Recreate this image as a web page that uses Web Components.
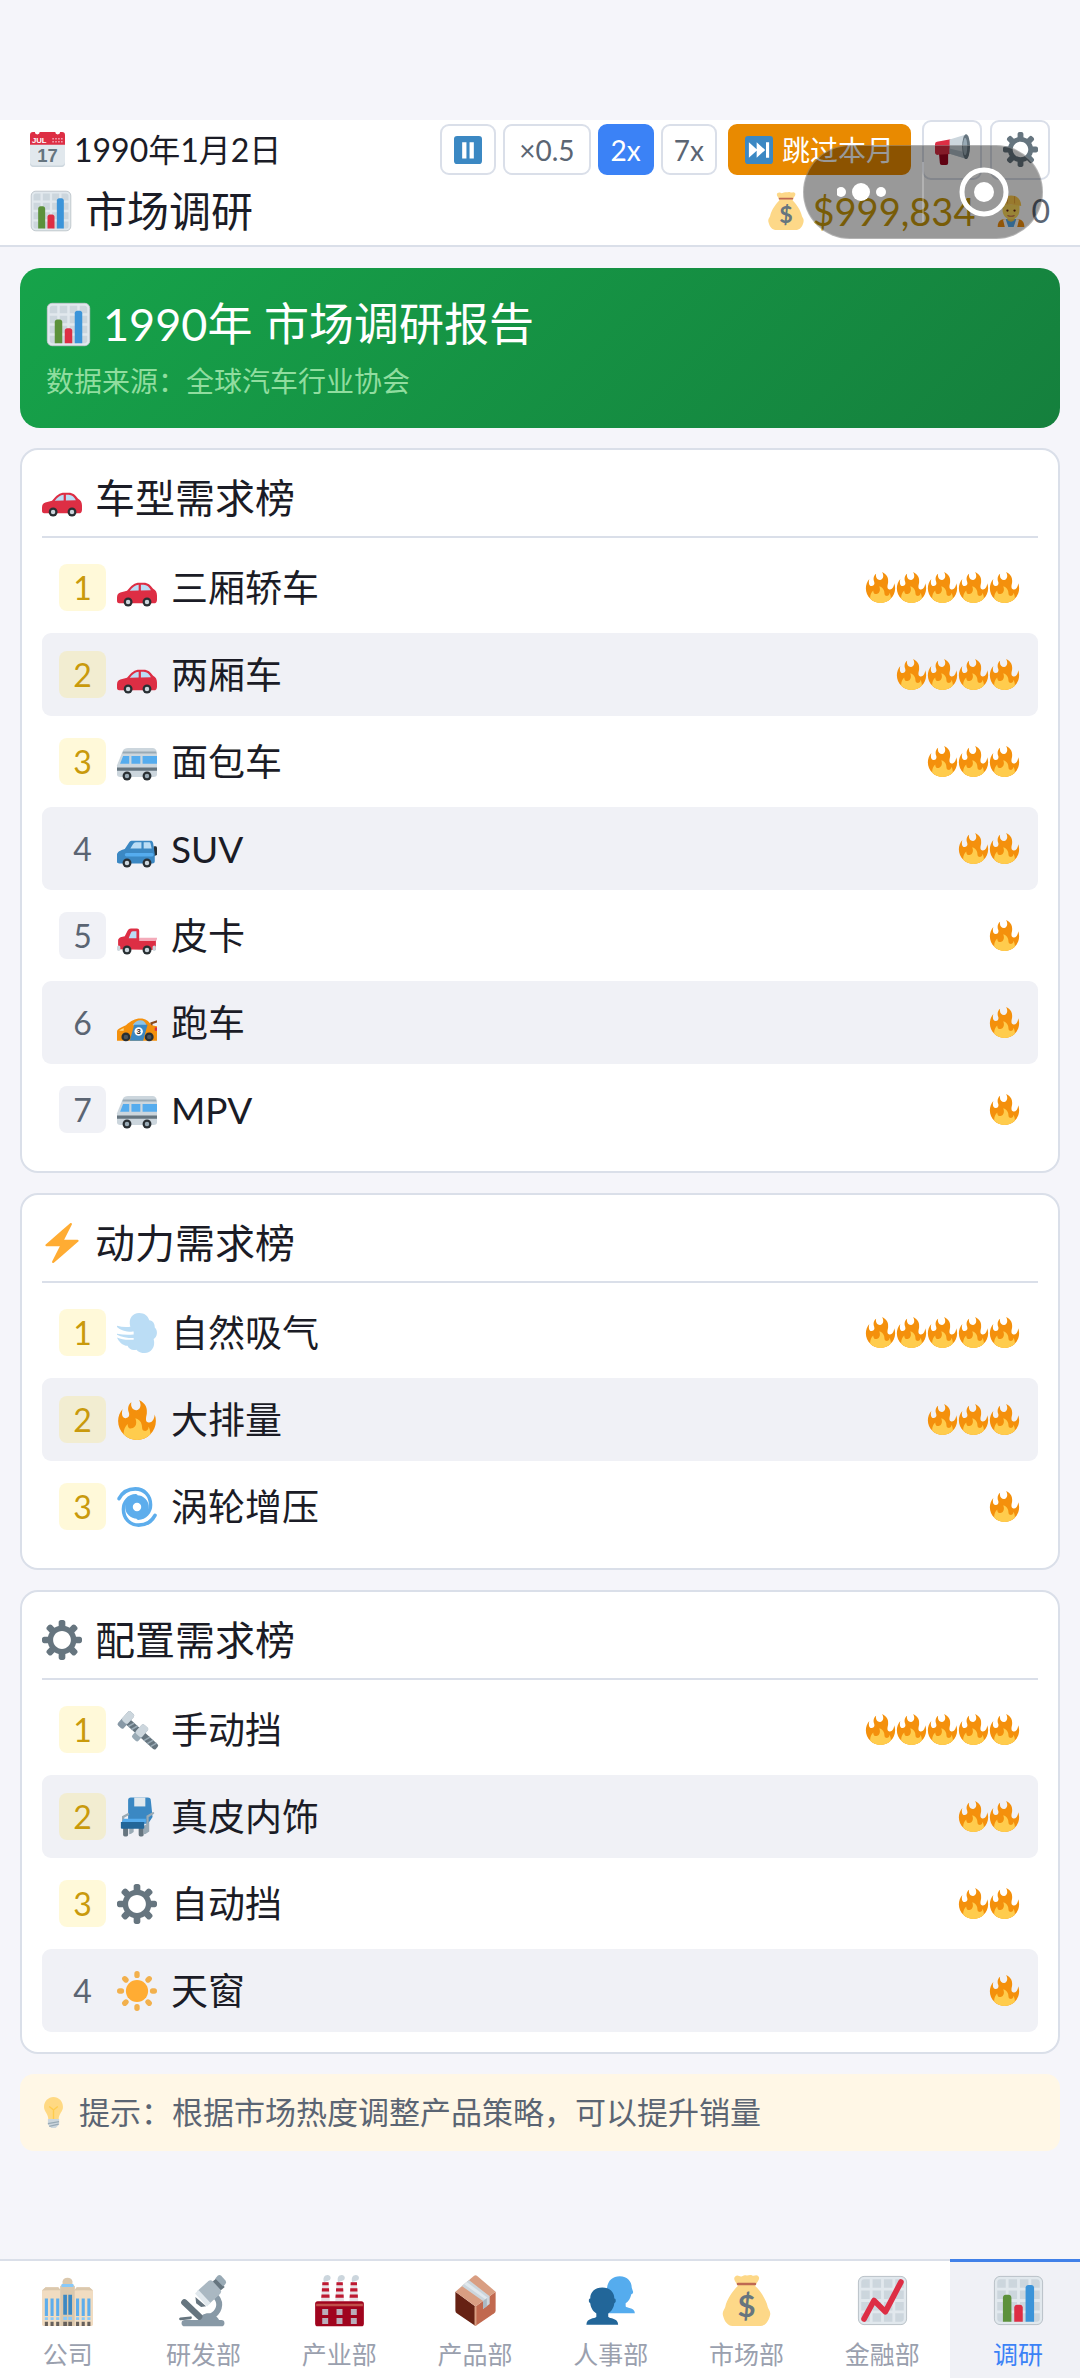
<!DOCTYPE html>
<html lang="zh-CN">
<head>
<meta charset="UTF-8">
<meta name="viewport" content="width=device-width, initial-scale=1">
<title>市场调研</title>
<style>
    :root {
        --bg: #f5f5fa;
        --line: #dadfe9;
        --soft: #f0f1f6;
        --ink: #1b1c26;
        --muted: #5b6573;
        --gold: #c99a0c;
        --blue: #3b82f6;
    }

    body {
        margin: 0;
        background: var(--bg);
        color: var(--ink);
        font-family: Lato, "Noto Sans CJK SC", sans-serif;
        line-height: 1;
    }
</style>
</head>
<body>

<game-app>
    <app-header slot="header" date="1990年1月2日" heading="市场调研" money="$999,834" staff="0"></app-header>

    <report-banner heading="1990年 市场调研报告">数据来源：全球汽车行业协会</report-banner>

    <rank-card icon="car" heading="车型需求榜">
        <rank-item rank="1" icon="car" heat="5">三厢轿车</rank-item>
        <rank-item rank="2" icon="car" heat="4">两厢车</rank-item>
        <rank-item rank="3" icon="van" heat="3">面包车</rank-item>
        <rank-item rank="4" icon="suv" heat="2">SUV</rank-item>
        <rank-item rank="5" icon="pickup" heat="1">皮卡</rank-item>
        <rank-item rank="6" icon="race" heat="1">跑车</rank-item>
        <rank-item rank="7" icon="van" heat="1">MPV</rank-item>
    </rank-card>

    <rank-card icon="bolt" heading="动力需求榜">
        <rank-item rank="1" icon="wind" heat="5">自然吸气</rank-item>
        <rank-item rank="2" icon="fire" heat="3">大排量</rank-item>
        <rank-item rank="3" icon="cyclone" heat="1">涡轮增压</rank-item>
    </rank-card>

    <rank-card icon="gear" heading="配置需求榜">
        <rank-item rank="1" icon="screw" heat="5">手动挡</rank-item>
        <rank-item rank="2" icon="seat" heat="2">真皮内饰</rank-item>
        <rank-item rank="3" icon="gear" heat="2">自动挡</rank-item>
        <rank-item rank="4" icon="sun" heat="1">天窗</rank-item>
    </rank-card>

    <tip-box>提示：根据市场热度调整产品策略，可以提升销量</tip-box>

    <tab-bar slot="tabs">
        <tab-item icon="office">公司</tab-item>
        <tab-item icon="microscope">研发部</tab-item>
        <tab-item icon="factory">产业部</tab-item>
        <tab-item icon="box">产品部</tab-item>
        <tab-item icon="people">人事部</tab-item>
        <tab-item icon="bag">市场部</tab-item>
        <tab-item icon="trend">金融部</tab-item>
        <tab-item icon="chart" active>调研</tab-item>
    </tab-bar>
</game-app>

<script>
// Icon artwork, all on a 36 x 36 grid
const GRID = `
    <rect x="1" y="1" width="34" height="34" rx="4" fill="#ccd6dd"/>
    <path fill="#e1e8ed" d="M31 1H5C2.791 1 1 2.791 1 5v26c0 2.209 1.791 4 4 4h26c2.209 0 4-1.791 4-4V5c0-2.209-1.791-4-4-4zm0 2c1.103 0 2 .897 2 2v4h-6V3h4zm-4 16h6v6h-6v-6zm0-2v-6h6v6h-6zM25 3v6h-6V3h6zm-6 8h6v6h-6v-6zm0 8h6v6h-6v-6zM17 3v6h-6V3h6zm-6 8h6v6h-6v-6zm0 8h6v6h-6v-6zM3 5c0-1.103.897-2 2-2h4v6H3V5zm0 6h6v6H3v-6zm0 8h6v6H3v-6zm2 14c-1.103 0-2-.897-2-2v-4h6v6H5zm6 0v-6h6v6h-6zm8 0v-6h6v6h-6zm12 0h-4v-6h6v4c0 1.103-.897 2-2 2z"/>
    <rect x="1" y="1" width="34" height="34" rx="4" fill="none" stroke="#b4bcc2" stroke-width=".6"/>`;

const wheels = (a, b, y, hub = '#ccd6dd') => [a, b].map(x => `
    <circle cx="${x}" cy="${y}" r="4" fill="#292f33"/>
    <circle cx="${x}" cy="${y}" r="2" fill="${hub}"/>`).join('');

const chimney = x => `
    <path fill="#e8dfe4" d="M${x + 1} 5h4.2l1 13.5H${x}z"/>
    <path fill="#be1931" d="M${x + .9} 5.2h4.4l.1 2H${x + .8}zM${x + .6} 9.4h5l.1 2.2H${x + .5}zM${x + .3} 13.8h5.6l.1 2.2H${x + .1}z"/>
    <path fill="#ccd6dd" d="M${x + 2} 5c-1-3 .5-5 2.5-5 3 0 3 4 0 4.200z"/>`;

const ICONS = {
    fire: `
        <path fill="#f4900c" d="M35 19c0-2.062-.367-4.039-1.04-5.868-.46 5.389-3.333 8.157-6.335 6.868-2.812-1.208-.917-5.917-.777-8.164.236-3.809-.012-8.169-6.931-11.794 2.875 5.5.333 8.917-2.333 9.125-2.958.231-5.667-2.542-4.667-7.042-3.238 2.386-3.332 6.402-2.333 9 1.042 2.708-.042 4.958-2.583 5.208-2.84.28-4.418-3.041-2.963-8.333C2.52 10.965 1 14.805 1 19c0 9.389 7.611 17 17 17s17-7.611 17-17z"/>
        <path fill="#ffcc4d" d="M28.394 23.999c.148 3.084-2.561 4.293-4.019 3.709-2.106-.843-1.541-2.291-2.083-5.291s-2.625-5.083-5.708-6c2.25 6.333-1.247 8.667-3.08 9.084-1.872.426-3.753-.001-3.968-4.007C7.352 23.668 6 26.676 6 30c0 .368.023.73.055 1.09C9.125 34.124 13.342 36 18 36s8.875-1.876 11.945-4.91c.032-.36.055-.722.055-1.09 0-2.187-.584-4.236-1.606-6.001z"/>`,
    chart: `${GRID}
        <path fill="#5c913b" d="M13 33H7V16c0-1.104.896-2 2-2h2c1.104 0 2 .896 2 2v17z"/>
        <path fill="#3b94d9" d="M29 33h-6V9c0-1.104.896-2 2-2h2c1.104 0 2 .896 2 2v24z"/>
        <path fill="#dd2e44" d="M21 33h-6V23c0-1.104.896-2 2-2h2c1.104 0 2 .896 2 2v10z"/>`,
    trend: `${GRID}
        <path fill="none" stroke="#dd2e44" stroke-width="4" stroke-linecap="round" stroke-linejoin="round" d="M5 31l7-13 8 8L31 5"/>`,
    gear: `
        <path fill="#66757f" d="M34 15h-3.362c-.324-1.369-.864-2.651-1.582-3.814l2.379-2.379c.781-.781.781-2.048 0-2.829l-1.414-1.414c-.781-.781-2.047-.781-2.828 0l-2.379 2.379C23.65 6.225 22.369 5.686 21 5.362V2c0-1.104-.896-2-2-2h-2c-1.104 0-2 .896-2 2v3.362c-1.369.324-2.651.864-3.814 1.582L8.808 4.565c-.781-.781-2.048-.781-2.828 0L4.565 5.979c-.781.781-.781 2.048-.001 2.829l2.379 2.379C6.225 12.35 5.686 13.632 5.362 15H2c-1.104 0-2 .896-2 2v2c0 1.104.896 2 2 2h3.362c.324 1.368.864 2.65 1.582 3.813l-2.379 2.379c-.78.78-.78 2.048.001 2.829l1.414 1.414c.78.78 2.047.78 2.828 0l2.379-2.379c1.163.719 2.445 1.258 3.814 1.582V34c0 1.104.896 2 2 2h2c1.104 0 2-.896 2-2v-3.362c1.368-.324 2.65-.864 3.813-1.582l2.379 2.379c.781.781 2.047.781 2.828 0l1.414-1.414c.781-.781.781-2.048 0-2.829l-2.379-2.379c.719-1.163 1.258-2.445 1.582-3.814H34c1.104 0 2-.896 2-2v-2C36 15.896 35.104 15 34 15zM18 26c-4.418 0-8-3.582-8-8s3.582-8 8-8 8 3.582 8 8-3.582 8-8 8z"/>`,
    bolt: `
        <path fill="#ffac33" d="M32.938 15.651C32.792 15.26 32.418 15 32 15H19.925L26.89 1.458c.219-.426.106-.947-.271-1.243C26.437.071 26.218 0 26 0c-.233 0-.466.082-.653.243L18 6.588 3.347 19.243c-.316.273-.43.714-.284 1.105S3.582 21 4 21h12.075L9.11 34.542c-.219.426-.106.947.271 1.243.182.144.401.215.619.215.233 0 .466-.082.653-.243L18 29.412l14.653-12.655c.317-.273.43-.714.285-1.106z"/>`,
    sun: `<circle cx="18" cy="18" r="10" fill="#ffac33"/>` +
        [0, 45, 90, 135, 180, 225, 270, 315].map(a =>
            `<rect x="15.6" y="0" width="4.800" height="6.400" rx="2.4" fill="#f2b04c" transform="rotate(${a} 18 18)"/>`).join(''),
    calendar: `
        <path fill="#e1e8ed" d="M0 10h36v22a4 4 0 0 1-4 4H4a4 4 0 0 1-4-4z"/>
        <path fill="#ccd6dd" d="M0 30v2a4 4 0 0 0 4 4h28a4 4 0 0 0 4-4v-2a4 4 0 0 1-4 4.5H4A4 4 0 0 1 0 30z"/>
        <path fill="#dd2e44" d="M0 13V3a3 3 0 0 1 3-3h2a2.5 2.5 0 0 0 5 0h16a2.5 2.5 0 0 0 5 0h2a3 3 0 0 1 3 3v10z"/>
        <path stroke="#f4abba" stroke-width="1.500" stroke-dasharray="1.5 1.5" d="M23 7h11M23 10h11"/>
        <text x="2" y="11.500" font-family="Liberation Sans" font-weight="700" font-size="8" fill="#fff">JUL</text>
        <text x="18" y="31" text-anchor="middle" font-family="Liberation Sans" font-weight="700" font-size="19" fill="#66757f">17</text>`,
    pause: `
        <rect width="36" height="36" rx="4" fill="#3b88c3"/>
        <path fill="#fff" d="M10.500 8h5.500v21h-5.500zM20 8h5.500v21H20z"/>`,
    skip: `
        <rect width="36" height="36" rx="4" fill="#3b88c3"/>
        <path fill="#fff" d="M5 8l11 10L5 28zM15 8l11 10-11 10zM27 8h4v20h-4z"/>`,
    megaphone: `
        <path fill="#a0041e" d="M4 21h9.500v11a2 2 0 0 1-2 2H7a2 2 0 0 1-2-2z"/>
        <path fill="#dd2e44" d="M2 10l14-2.500v15L3 23.500a2.500 2.500 0 0 1-3-2.500v-8.500Q0 10.500 2 10z"/>
        <path fill="#ccd6dd" d="M15 7.800L32 2.500v25L15 22.300z"/>
        <path fill="#aab8c2" d="M15 17l17 4v6.500l-17-5.200z"/>
        <ellipse cx="32" cy="15" rx="4" ry="12.800" fill="#66757f"/>
        <ellipse cx="31" cy="15" rx="2.200" ry="9" fill="#99aab5"/>`,
    bag: `
        <path fill="#fdd888" d="M12 8C11 5 8 3 10 1c2-1.500 3 .5 4.500 0S17 0 18 .3s2.500-.8 4 0 3-1 4.500.7C28 3 25 5 24 8z"/>
        <path fill="#fdd888" d="M12 7.500h12c4 4 8 10 9 15 .5 2 2.500 3 1.500 6.500-1 4-3.500 7-6.500 7H8c-3 0-5.500-3-6.500-7C.5 25.500 2.500 24.500 3 22.500c1-5 5-11 9-15z"/>
        <path stroke="#bf6952" stroke-width="1.800" stroke-linecap="round" d="M12 6.300h12"/>
        <text x="18" y="29.500" text-anchor="middle" font-family="Lato" font-weight="700" font-size="22" fill="#67757f">$</text>`,
    worker: `
        <path fill="#f4900c" d="M3 36c0-6 3-9 9-9h12c6 0 9 3 9 9z"/>
        <path fill="#55acee" d="M12 27h12v9H12z"/>
        <path fill="#fff" d="M9 27.500l3-.5 3 9h-4zM27 27.500l-3-.5-3 9h4z"/>
        <path fill="#f7c94b" d="M14 24h8v4q-4 4-8 0z"/>
        <path fill="#ffdc5d" d="M8.500 11h19v6c0 6-4 10.500-9.500 10.500S8.500 23 8.500 17z"/>
        <circle cx="14" cy="17.500" r="1.300" fill="#662113"/>
        <circle cx="22" cy="17.500" r="1.300" fill="#662113"/>
        <path fill="none" stroke="#c1694f" stroke-width="1.200" d="M14 23q4 2 8 0"/>
        <path fill="#ffcc4d" d="M6.500 12.500C6.500 5 11 .5 18 .5S29.500 5 29.500 12.500q-11.500-3-23 0z"/>
        <path fill="none" stroke="#e8a63a" stroke-width="1.200" d="M14 1.500v8M22 1.500v8"/>`,
    bulb: `
        <path fill="#ffd983" d="M29 11.500C29 17 24 19 24 26H12c0-7-5-9-5-14.500C7 5 12 0 18 0s11 5 11 11.500z"/>
        <path fill="none" stroke="#ffcc4d" stroke-width="1.600" d="M18 26V15l-5-4M18 15l5-4"/>
        <path fill="#ccd6dd" d="M11.500 25.500h13V32l-4 4h-5l-4-4z"/>
        <path stroke="#99aab5" stroke-width="1.500" d="M11.500 31l13-2.500M13 34l11-2.500"/>`,
    car: `
        <path fill="#dd2e44" d="M0 27c0-3 1-4.500 3-5l6-1.500c4-5 7-7.300 11-7.300h4c4 0 6 2 8.500 5.500C35 20 36 22 36 25v3.500c0 2-1 3.300-3 3.300H2c-1.500 0-2-1-2-2.300z"/>
        <path fill="#bbddf5" d="M11.500 20.500c2.500-3.500 5-5.300 8-5.500v5.200zM21.500 15H24c3 0 5 2 6.500 5l-9 .2z"/>
        ${wheels(10, 27, 30.6)}`,
    suv: `
        <path fill="#292f33" d="M33 15.500h2q1 0 1 1.500v6.500l-3 1z"/>
        <path fill="#3b88c3" d="M0 30v-7c0-2 3-4 7-5l4-6c.8-1.200 1.500-1.500 3-1.500h16c1.500 0 2 .5 2.500 2l1.500 10V29c0 1.500-1 2-2 2H2q-2 0-2-1z"/>
        <path fill="#bbddf5" d="M12 17.500l2.500-4q.8-1.500 2.500-1.500h5v5.500zM24 12h5q1 0 1.200 1l1 4.500H24z"/>
        <path stroke="#55acee" stroke-width="3" stroke-linecap="round" d="M8.500 23.200h23"/>
        ${wheels(9, 27, 30.6)}`,
    pickup: `
        <path fill="#dd2e44" d="M1 30V22q0-2 3-3l3-.8 2.500-5q1-2 3-2H18q2 0 2 2V20h15v10.500z"/>
        <path fill="#bbddf5" d="M10.500 20l2-5q.5-1.300 2-1.300h3V20z"/>
        <path fill="#f4abba" d="M20 19.500h16v1q0 2-2 2H20z"/>
        <rect x="0" y="26.500" width="3" height="5" rx="1.500" fill="#ccd6dd"/>
        <rect x="32" y="26.500" width="3" height="5" rx="1.500" fill="#ccd6dd"/>
        ${wheels(9, 27, 30.6)}`,
    van: `
        <path fill="#ccd6dd" d="M0 29V21L5 8.500Q6.500 5.500 10 5.500h22q3 0 4 4V29q0 2.500-3 2.500H3Q0 31.500 0 29z"/>
        <path fill="#99aab5" d="M5.500 8.500h29.500l.6 1.800H4.700z"/>
        <path fill="#55acee" d="M2.800 19.500L5.500 12.500H11v7zM13 12.500h8v7h-8zM23 12.500h13v7H23z"/>
        <path fill="#66757f" d="M0 23h36v2.800H0z"/>
        ${wheels(9, 27, 30.6, '#99aab5')}`,
    race: `
        <path fill="#8a4b1c" d="M30 17.500l6-2v2l-4 1.500v3h-2z"/>
        <path fill="#f4900c" d="M0 34v-8c0-3 4-4 8-6 5-4 8-6 13-6 5 0 7 2 10 6l5 1v13z"/>
        <path fill="#8cc4e8" d="M14 20q3-4.500 7-4.500 4 0 5.500 4.500z"/>
        <path fill="#3b88c3" d="M15.500 19.500h12l-4 14.500h-12z"/>
        <path fill="#ffd983" d="M3 24l3-1.500V25H2z"/>
        <path fill="#dd2e44" d="M34 22h2v3h-2z"/>
        <circle cx="8" cy="30.500" r="4" fill="#292f33"/><circle cx="8" cy="30.500" r="2" fill="#4b545d"/>
        <circle cx="29" cy="30.500" r="4" fill="#292f33"/><circle cx="29" cy="30.500" r="2" fill="#4b545d"/>
        <circle cx="19.500" cy="25.700" r="3.800" fill="#fff"/>
        <text x="19.500" y="28.300" text-anchor="middle" font-family="Liberation Sans" font-weight="700" font-size="7" fill="#292f33">3</text>`,
    wind: `
        <path fill="#bbddf5" d="M0 11.500c4 1 8 1.500 12 .8C10 5 14 0 20 0c4.500 0 8 2.500 9 6.500 3.500.5 5 3 5 6.500 3 3 2.500 8-1 10.500C35 31 30.500 36 25 36c-3 0-6-1-7.500-3-3.500 1-7-.5-8-3.500C5 29.500 1.500 25.500 0 22c4 2 9 2.500 15 2v-1.500C9 22.500 4 21.500 0 19.500v-.8c5 .9 10 1 15 .6v-2.600c-6 .5-12-1.200-15-4.200z"/>`,
    cyclone: `
        <g fill="none" stroke="#5dadec" stroke-linecap="round">
            <circle cx="18" cy="18" r="7.200" stroke-width="6.800"/>
            <path stroke-width="3.200" d="M1.800 10.500C5 4.500 10.500 1.700 16.500 1.700c8 0 13.700 6 13.700 14.300 0 6.500-4.700 12-11.200 12"/>
            <path stroke-width="3.200" d="M34.200 25.500C31 31.500 25.500 34.300 19.500 34.300 11.500 34.300 5.800 28.300 5.800 20c0-6.500 4.700-12 11.200-12"/>
        </g>`,
    screw: `
        <g transform="rotate(42 18 18) translate(5 0)">
            <rect x="-1" y="15" width="38" height="6" rx="2" fill="#66757f"/>
            <path stroke="#99aab5" stroke-width="1.400" d="M5 21l2-6M9 21l2-6M24 21l2-6M28 21l2-6M32 21l2-6"/>
            <rect x="-4" y="9.500" width="7" height="17" rx="2" fill="#8899a6"/>
            <rect x="-4" y="9.500" width="7" height="11" rx="2" fill="#ccd6dd"/>
            <rect x="13" y="10" width="7.500" height="16" rx="2" fill="#99aab5"/>
            <rect x="13" y="10" width="7.500" height="11" rx="2" fill="#ccd6dd"/>
        </g>`,
    seat: `
        <path fill="#66757f" d="M5.500 27h4.500v7q0 1.500-1.500 1.500H7Q5.500 35.500 5.500 34zM19.500 27H24v7q0 1.500-1.500 1.500H21q-1.500 0-1.500-1.500z"/>
        <path fill="#99aab5" d="M11 27h4v4.500q-2.500 2-4 2zM24 26l5-3v8q-3 2.500-5 2.500z"/>
        <path fill="#3b88c3" d="M10 20V3q0-2.500 2.500-2.500h15Q30.500.5 30.500 3.500L32 18l-4 6H10z"/>
        <path fill="#e1e8ed" d="M15.500.5h10v8h-10z"/>
        <path fill="none" stroke="#99aab5" stroke-width="2" stroke-linecap="round" d="M10 15.500l-4.500 2.500v4M32.500 14.500l-5 3v7"/>
        <path fill="#55acee" d="M6 19.500h20V23H4z"/>
        <path fill="#226699" d="M3.500 22.500h21V28q0 .5-1 .5H4.500q-1 0-1-.5z"/>`,
    office: `
        <path fill="#f1dcc1" d="M0 11l2.500-2.300h9L13 10.500V36H1q-1 0-1-1zM36 11l-2.500-2.300h-9L23 10.500V36h12q1 0 1-1z"/>
        <path fill="#dbc8ad" d="M0 11l2.500-2.300h9L13 10.500zM36 11l-2.500-2.300h-9L23 10.500zM12.800 36V8l1-1h8.400l1 1v28z"/>
        <path fill="#dbc8ad" d="M14.500 4.500Q15 2 18 2t3.500 2.500V8h-7z"/>
        <path fill="#88c9f9" d="M13.800 6.300h8.400v2.200h-8.400z"/>
        <path fill="#5dadec" d="M2 16.500h2.200V29H2zM6 16.500h2.200V29H6zM10 16.500h2.200V29H10zM24 16.500h2.200V29H24zM28 16.500h2.200V29H28zM32 16.500h2.200V29H32z"/>
        <path fill="#3b88c3" d="M15 14h2.600v14H15zM18.600 14h2.600v14h-2.600z"/>
        <path fill="#88c9f9" d="M2 29.800h2.200v2H2zM6 29.800h2.200v2H6zM10 29.800h2.200v2H10zM15 29.500h2.600v2.300H15zM18.600 29.500h2.600v2.300h-2.600zM24 29.800h2.200v2H24zM28 29.800h2.200v2H28zM32 29.800h2.200v2H32z"/>
        <path fill="#66605c" d="M2 33h2.200v3H2zM6 33h2.200v3H6zM10 33h2.200v3H10zM15 33h2.600v3H15zM18.600 33h2.600v3h-2.600zM24 33h2.200v3H24zM28 33h2.200v3H28zM32 33h2.200v3H32z"/>`,
    microscope: `
        <path fill="none" stroke="#8899a6" stroke-width="4.200" d="M27 15.500c4 5 2 11-4 14"/>
        <path fill="#8899a6" d="M2.500 34q0-2.200 2.300-2.200H14c3-6.500 12-6.500 15 0h1.500q2.300 0 2.300 2.200t-2.300 2.200H4.800Q2.500 36.200 2.500 34z"/>
        <path stroke="#66757f" stroke-width="4.500" stroke-linecap="round" d="M4.500 19.300l10.500 10"/>
        <path stroke="#66757f" stroke-width="2" stroke-linecap="round" d="M1.800 31l7-.8"/>
        <path fill="#66757f" d="M12.300 15.500l7.500 6.500-3.500.5-3.500-2.500zM24 5l3-2.500 6 6L30 11z"/>
        <path fill="#aab8c2" d="M13.500 11.500l8-7.300q1.500-1.200 3 .2l5.500 6q1 1.500-.2 2.800L22 20.500z"/>
        <path fill="#e1e8ed" d="M12 13l2.500-2.500 8.500 9.200-2.500 2.500z"/>
        <path fill="#99aab5" d="M26.300 2.500L28 .6q1.200-1.200 2.500 0l3 3.200q1 1.200 0 2.500l-1.600 1.900z"/>`,
    factory: `
        ${chimney(5)}${chimney(15)}${chimney(25)}
        <rect x=".8" y="18.500" width="34.400" height="17.700" rx="1.800" fill="#a0041e"/>
        <path fill="#c1504a" d="M1.500 20.300h33v1.700h-33z"/>
        <path fill="#b9aebb" d="M5.800 24h4.200v4.200H5.800zM15.900 24h4.200v4.200h-4.200zM26 24h4.200v4.200H26zM5.800 30.300h4.200v4.200H5.800zM15.900 30.300h4.200v4.200h-4.200zM26 30.300h4.200v4.200H26z"/>`,
    box: `
        <path fill="#662113" d="M3.800 11.800L18 22.300V36L4.800 27q-1-.7-1-2z"/>
        <path fill="#c1694f" d="M32.200 11.800L18 22.300V36l13.200-9q1-.7 1-2z"/>
        <path fill="#d99e82" d="M17 .5q1-.7 2 0l13.200 11.300L18 22.300 3.800 11.800z"/>
        <path fill="#d99e82" d="M17.300 22h1.400v13.500l-.7.5-.7-.5z"/>
        <path fill="#ccd6dd" d="M8.300 7.800l5-4.200L28 15v5.500L23.300 24v-5.700z"/>
        <path fill="#e1e8ed" d="M10 6.500l1.800-1.600L26.500 16l-1.600 1.200z"/>
        <path fill="#aab8c2" d="M23.300 18.300l2.700-1.900v5.600L23.300 24z"/>`,
    people: `
        <path fill="#55acee" d="M15.500 10.500C15.500 4 19.500.8 24.500.8c5.500 0 8.500 3.700 8.500 8.200l1 3q0 1.200-1.300 1.500c-.7 3-2 5-4 6.500v2c0 1.500 6.500.5 6.500 5H14z"/>
        <path fill="#226699" d="M1 35.200c0-5 6-4.200 7-5.700v-2.300c-3-2-4-4.700-4.300-7.200q-1.300-.5-1-2.500.3-1 1-1C3.700 12 7 8.800 12.200 8.800s8.500 3.200 8.500 7.700q.7 0 1 1 .3 2-1 2.500c-.3 2.500-1.400 5.200-4.300 7.200v2.300c1 1.500 7 .7 7 5.700z"/>`
};

// Small picture, as tall as the font size around it
class EmojiIcon extends HTMLElement {
    constructor() {
        super();
        this.attachShadow({ mode: 'open' });
    }

    connectedCallback() {
        this.shadowRoot.innerHTML = `
            <style>
                :host { display: inline-block; flex: none; width: 1em; height: 1em; }
                svg { display: block; width: 100%; height: 100%; overflow: visible; }
            </style>
            <svg viewBox="0 0 36 36" aria-hidden="true">${ICONS[this.getAttribute('name')] || ''}</svg>
        `;
    }
}
customElements.define('emoji-icon', EmojiIcon);

// Page frame: header, content, tabs
class GameApp extends HTMLElement {
    constructor() {
        super();
        this.attachShadow({ mode: 'open' });
        this.shadowRoot.innerHTML = `
            <style>
                :host {
                    display: flex;
                    flex-direction: column;
                    box-sizing: border-box;
                    min-height: 100vh;
                    padding-top: 120px;
                    overflow: hidden;
                }

                main {
                    flex: 1;
                    display: flex;
                    flex-direction: column;
                    gap: 20px;
                    padding: 21px 20px 24px;
                }
            </style>

            <slot name="header"></slot>
            <main><slot></slot></main>
            <slot name="tabs"></slot>
        `;
    }
}
customElements.define('game-app', GameApp);

// Floating capsule of the host app, lies over the header
class CapsuleMenu extends HTMLElement {
    constructor() {
        super();
        this.attachShadow({ mode: 'open' });
        this.shadowRoot.innerHTML = `
            <style>
                :host {
                    display: flex;
                    align-items: center;
                    box-sizing: border-box;
                    width: 240px;
                    height: 94px;
                    border: 1px solid rgba(255, 255, 255, .25);
                    border-radius: 47px;
                    background: rgba(0, 0, 0, .4);
                }

                button {
                    flex: 1;
                    display: grid;
                    place-items: center;
                    height: 60px;
                    padding: 0;
                    border: 0;
                    background: none;
                }

                button + button { border-left: 2px solid rgba(255, 255, 255, .25); }
                svg { display: block; fill: #fff; }
            </style>

            <button type="button" aria-label="更多">
                <svg width="52" height="20" viewBox="0 0 52 20">
                    <circle cx="4" cy="10" r="5"/><circle cx="24" cy="10" r="9"/><circle cx="44" cy="10" r="5"/>
                </svg>
            </button>
            <button type="button" aria-label="关闭">
                <svg width="52" height="52" viewBox="0 0 52 52">
                    <circle cx="27" cy="26" r="22" fill="none" stroke="#fff" stroke-width="5"/>
                    <circle cx="27" cy="26" r="10"/>
                </svg>
            </button>
        `;
    }
}
customElements.define('capsule-menu', CapsuleMenu);

class AppHeader extends HTMLElement {
    constructor() {
        super();
        this.attachShadow({ mode: 'open' });
    }

    connectedCallback() {
        this.shadowRoot.innerHTML = `
            <style>
                :host {
                    display: block;
                    position: relative;
                    padding: 0 30px 3px;
                    background: #fff;
                    border-bottom: 2px solid var(--line);
                }

                .row { display: flex; align-items: center; justify-content: space-between; }
                .row.top { height: 59px; }
                .row.sub { height: 63px; }
                .date, .title, .money, .staff, .tools, .speeds, .round { display: flex; align-items: center; }
                .date { gap: 9px; font-size: 32px; }
                .date emoji-icon { font-size: 35px; }
                .tools { gap: 11px; }
                .speeds { gap: 7px; }
                .round { gap: 8px; }

                button {
                    display: flex;
                    align-items: center;
                    justify-content: center;
                    box-sizing: border-box;
                    height: 51px;
                    padding: 0 11px;
                    border: 2px solid var(--line);
                    border-radius: 9px;
                    background: #fff;
                    color: var(--muted);
                    font: inherit;
                    font-size: 28px;
                    line-height: 1;
                }

                .speeds button { min-width: 56px; }
                .speeds .slow { padding: 0 14px; }
                .speeds .on { background: var(--blue); border-color: var(--blue); color: #fff; }
                .skip { gap: 9px; padding: 0 15px; border-color: #e98a00; background: #e98a00; color: #fff; }
                .round button { width: 60px; height: 60px; padding: 0; font-size: 35px; }

                h1 { margin: 0; font-size: 42px; font-weight: 400; }
                .title { gap: 13px; }
                .title emoji-icon { font-size: 42px; }
                .stats { display: flex; align-items: center; gap: 20px; }
                .money { gap: 8px; color: var(--gold); font-size: 38px; }
                .staff { gap: 4px; color: var(--muted); font-size: 32px; }

                capsule-menu { position: absolute; top: 25px; right: 37px; }
            </style>

            <div class="row top">
                <div class="date"><emoji-icon name="calendar"></emoji-icon><span>${this.getAttribute('date')}</span></div>
                <div class="tools">
                    <div class="speeds">
                        <button type="button" aria-label="暂停"><emoji-icon name="pause"></emoji-icon></button>
                        <button type="button" class="slow">×0.5</button>
                        <button type="button" class="on">2x</button>
                        <button type="button">7x</button>
                    </div>
                    <button type="button" class="skip"><emoji-icon name="skip"></emoji-icon>跳过本月</button>
                    <div class="round">
                        <button type="button" aria-label="公告"><emoji-icon name="megaphone"></emoji-icon></button>
                        <button type="button" aria-label="设置"><emoji-icon name="gear"></emoji-icon></button>
                    </div>
                </div>
            </div>
            <div class="row sub">
                <div class="title"><emoji-icon name="chart"></emoji-icon><h1>${this.getAttribute('heading')}</h1></div>
                <div class="stats">
                    <div class="money"><emoji-icon name="bag"></emoji-icon><span>${this.getAttribute('money')}</span></div>
                    <div class="staff"><emoji-icon name="worker"></emoji-icon><span>${this.getAttribute('staff')}</span></div>
                </div>
            </div>
            <capsule-menu></capsule-menu>
        `;
    }
}
customElements.define('app-header', AppHeader);

class ReportBanner extends HTMLElement {
    constructor() {
        super();
        this.attachShadow({ mode: 'open' });
    }

    connectedCallback() {
        this.shadowRoot.innerHTML = `
            <style>
                :host {
                    display: flex;
                    flex-direction: column;
                    gap: 20px;
                    padding: 34px 26px 33px;
                    border-radius: 20px;
                    background: linear-gradient(135deg, #16a34a, #15803d);
                    color: #fff;
                }

                h2 { display: flex; align-items: center; gap: 12px; margin: 0; font-size: 45px; font-weight: 400; }
                p { margin: 0; color: #90dd9f; font-size: 28px; }
            </style>

            <h2><emoji-icon name="chart"></emoji-icon><span>${this.getAttribute('heading')}</span></h2>
            <p><slot></slot></p>
        `;
    }
}
customElements.define('report-banner', ReportBanner);

class RankCard extends HTMLElement {
    constructor() {
        super();
        this.attachShadow({ mode: 'open' });
    }

    connectedCallback() {
        this.shadowRoot.innerHTML = `
            <style>
                :host {
                    display: block;
                    padding: 20px;
                    border: 2px solid var(--line);
                    border-radius: 18px;
                    background: #fff;
                }

                h3 {
                    display: flex;
                    align-items: center;
                    gap: 13px;
                    margin: 0 0 8px;
                    padding: 8px 0 18px;
                    border-bottom: 2px solid var(--line);
                    font-size: 40px;
                    font-weight: 400;
                }

                .list { display: flex; flex-direction: column; gap: 4px; }
                ::slotted(:nth-child(even)) { background: var(--soft); }
            </style>

            <h3><emoji-icon name="${this.getAttribute('icon')}"></emoji-icon><span>${this.getAttribute('heading')}</span></h3>
            <div class="list" role="list"><slot></slot></div>
        `;
    }
}
customElements.define('rank-card', RankCard);

class RankItem extends HTMLElement {
    constructor() {
        super();
        this.attachShadow({ mode: 'open' });
    }

    connectedCallback() {
        const rank = Number(this.getAttribute('rank'));
        const heat = Number(this.getAttribute('heat'));
        this.setAttribute('role', 'listitem');
        this.shadowRoot.innerHTML = `
            <style>
                :host {
                    display: flex;
                    align-items: center;
                    padding: 18px 18px 18px 17px;
                    border-radius: 9px;
                    font-size: 37px;
                }

                .rank {
                    display: grid;
                    place-items: center;
                    width: 47px;
                    height: 47px;
                    margin-right: 11px;
                    border-radius: 8px;
                    background: var(--soft);
                    color: var(--muted);
                    font-size: 32px;
                }

                .rank.top { background: rgba(255, 215, 0, .15); color: var(--gold); }
                .kind { margin-right: 14px; font-size: 40px; }
                .name { flex: 1; }
                .heat { display: flex; font-size: 31px; }
            </style>

            <span class="rank ${rank <= 3 ? 'top' : ''}">${rank}</span>
            <emoji-icon class="kind" name="${this.getAttribute('icon')}"></emoji-icon>
            <span class="name"><slot></slot></span>
            <span class="heat">${'<emoji-icon name="fire"></emoji-icon>'.repeat(heat)}</span>
        `;
    }
}
customElements.define('rank-item', RankItem);

class TipBox extends HTMLElement {
    constructor() {
        super();
        this.attachShadow({ mode: 'open' });
        this.shadowRoot.innerHTML = `
            <style>
                :host {
                    display: flex;
                    align-items: center;
                    gap: 10px;
                    padding: 23px 18px;
                    border-radius: 14px;
                    background: #fff7e6;
                    color: var(--muted);
                    font-size: 31px;
                }
            </style>

            <emoji-icon name="bulb"></emoji-icon>
            <span><slot></slot></span>
        `;
    }
}
customElements.define('tip-box', TipBox);

// The tab strip is a little wider than the window and runs off its right edge
class TabBar extends HTMLElement {
    constructor() {
        super();
        this.attachShadow({ mode: 'open' });
        this.shadowRoot.innerHTML = `
            <style>
                :host { display: block; overflow: hidden; background: #fff; }
                nav { display: flex; margin-right: -6px; }
                ::slotted(tab-item) { flex: 1; }
            </style>

            <nav><slot></slot></nav>
        `;
    }
}
customElements.define('tab-bar', TabBar);

class TabItem extends HTMLElement {
    constructor() {
        super();
        this.attachShadow({ mode: 'open' });
    }

    connectedCallback() {
        this.shadowRoot.innerHTML = `
            <style>
                :host { display: block; color: #9aa0ae; }

                a {
                    display: flex;
                    flex-direction: column;
                    align-items: center;
                    gap: 16px;
                    padding: 14px 0 11px;
                    border-top: 2px solid var(--line);
                    color: inherit;
                    font-size: 25px;
                    text-decoration: none;
                }

                emoji-icon { font-size: 51px; }
                :host([active]) { color: var(--blue); background: var(--soft); }
                :host([active]) a { padding-top: 13px; border-top: 3px solid #4080e8; }
            </style>

            <a href="#" ${this.hasAttribute('active') ? 'aria-current="page"' : ''}>
                <emoji-icon name="${this.getAttribute('icon')}"></emoji-icon>
                <span><slot></slot></span>
            </a>
        `;
    }
}
customElements.define('tab-item', TabItem);
</script>
</body>
</html>
